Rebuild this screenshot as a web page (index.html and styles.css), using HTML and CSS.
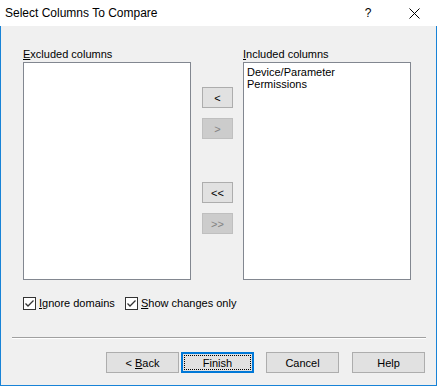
FILE: index.html
```html
<!DOCTYPE html>
<html lang="en">
  <head>
    <meta charset="UTF-8" />
    <title>Select Columns To Compare</title>
    <link rel="stylesheet" href="styles.css">
  </head>
  <body>
    <div class="window">
      <div class="titlebar">
        <span class="title">Select Columns To Compare</span>
        <span class="cap-btn">?</span>
        <span class="cap-btn">
          <svg width="11" height="11" viewBox="0 0 11 11">
            <path d="M0.5 0.5 L10.5 10.5 M10.5 0.5 L0.5 10.5" stroke="#000" stroke-width="1" fill="none" />
          </svg>
        </span>
      </div>
      <div class="body">
        <div class="lists">
          <div class="col">
            <div class="label"><u>E</u>xcluded columns</div>
            <div class="listbox"></div>
          </div>
          <div class="movers">
            <button class="mover">&lt;</button>
            <button class="mover disabled">&gt;</button>
            <button class="mover wide-gap">&lt;&lt;</button>
            <button class="mover disabled">&gt;&gt;</button>
          </div>
          <div class="col">
            <div class="label"><u>I</u>ncluded columns</div>
            <div class="listbox">
              <div class="item">Device/Parameter</div>
              <div class="item">Permissions</div>
            </div>
          </div>
        </div>
        <div class="checks">
          <label class="check first">
            <svg width="13" height="13" viewBox="0 0 13 13">
              <rect x="0.5" y="0.5" width="12" height="12" fill="#fff" stroke="#333" />
              <polyline points="2.5,6.5 5,9 10.5,3.5" fill="none" stroke="#333" stroke-width="1.3" />
            </svg>
            <span><u>I</u>gnore domains</span>
          </label>
          <label class="check">
            <svg width="13" height="13" viewBox="0 0 13 13">
              <rect x="0.5" y="0.5" width="12" height="12" fill="#fff" stroke="#333" />
              <polyline points="2.5,6.5 5,9 10.5,3.5" fill="none" stroke="#333" stroke-width="1.3" />
            </svg>
            <span><u>S</u>how changes only</span>
          </label>
        </div>
        <div class="sep"></div>
        <div class="actions">
          <button class="btn">&lt; <u>B</u>ack</button>
          <button class="btn default">Finish</button>
          <button class="btn cancel">Cancel</button>
          <button class="btn help">Help</button>
        </div>
      </div>
    </div>
  </body>
</html>
```

FILE: styles.css
```css
body {
  margin: 0;
  font-family: "Liberation Sans", Arial, sans-serif;
  font-size: 11px;
  color: #000;
}

.window {
  width: 437px;
  height: 386px;
  display: flex;
  flex-direction: column;
}

.titlebar {
  height: 26px;
  background-color: #fff;
  display: flex;
  align-items: center;
}

.title {
  flex: 1;
  padding-left: 5px;
  font-size: 12px;
}

.cap-btn {
  width: 46px;
  height: 26px;
  display: flex;
  align-items: center;
  justify-content: center;
  font-size: 12px;
}

.body {
  flex: 1;
  box-sizing: border-box;
  background-color: #f0f0f0;
  border: 1px solid #1883d7;
  border-top: none;
  padding: 22px 11px 0 22px;
}

.lists {
  display: flex;
  align-items: flex-start;
}

.label {
  line-height: 13px;
  margin-bottom: 1px;
}

.listbox {
  width: 168px;
  height: 218px;
  box-sizing: border-box;
  background-color: #fff;
  border: 1px solid #828790;
  padding: 3px 3px 0;
}

.item {
  line-height: 12px;
  white-space: nowrap;
}

.movers {
  width: 52px;
  box-sizing: border-box;
  padding: 39px 0 0 11px;
  display: flex;
  flex-direction: column;
  gap: 10px;
}

.mover {
  width: 31px;
  height: 21px;
  padding: 0;
  background-color: #e1e1e1;
  border: 1px solid #adadad;
  font-family: inherit;
  font-size: 11px;
  color: #000;
}

.mover.disabled {
  background-color: #cccccc;
  border-color: #bfbfbf;
  color: #838383;
}

.mover.wide-gap {
  margin-top: 33px;
}

.checks {
  display: flex;
  margin-top: 17px;
  height: 13px;
}

.check {
  display: flex;
  align-items: center;
  gap: 3px;
  line-height: 13px;
  white-space: nowrap;
}

.check.first {
  width: 102px;
}

.check svg {
  display: block;
  flex: none;
}

.sep {
  margin: 27px 0 0 -11px;
  width: 414px;
  height: 1px;
  background-color: #a0a0a0;
  border-bottom: 1px solid #fff;
}

.actions {
  display: flex;
  margin-top: 13px;
  padding-left: 83px;
}

.btn {
  position: relative;
  width: 73px;
  height: 21px;
  padding: 0;
  background-color: #e1e1e1;
  border: 1px solid #adadad;
  font-family: inherit;
  font-size: 11px;
  color: #000;
}

.btn.default {
  margin-left: 2px;
  border-color: #0078d7;
  box-shadow: inset 0 0 0 1px #0078d7;
}

.btn.default::after {
  content: "";
  position: absolute;
  top: 2px;
  left: 2px;
  right: 2px;
  bottom: 2px;
  border: 1px dotted #000;
}

.btn.cancel {
  margin-left: 12px;
}

.btn.help {
  margin-left: 13px;
}
```
